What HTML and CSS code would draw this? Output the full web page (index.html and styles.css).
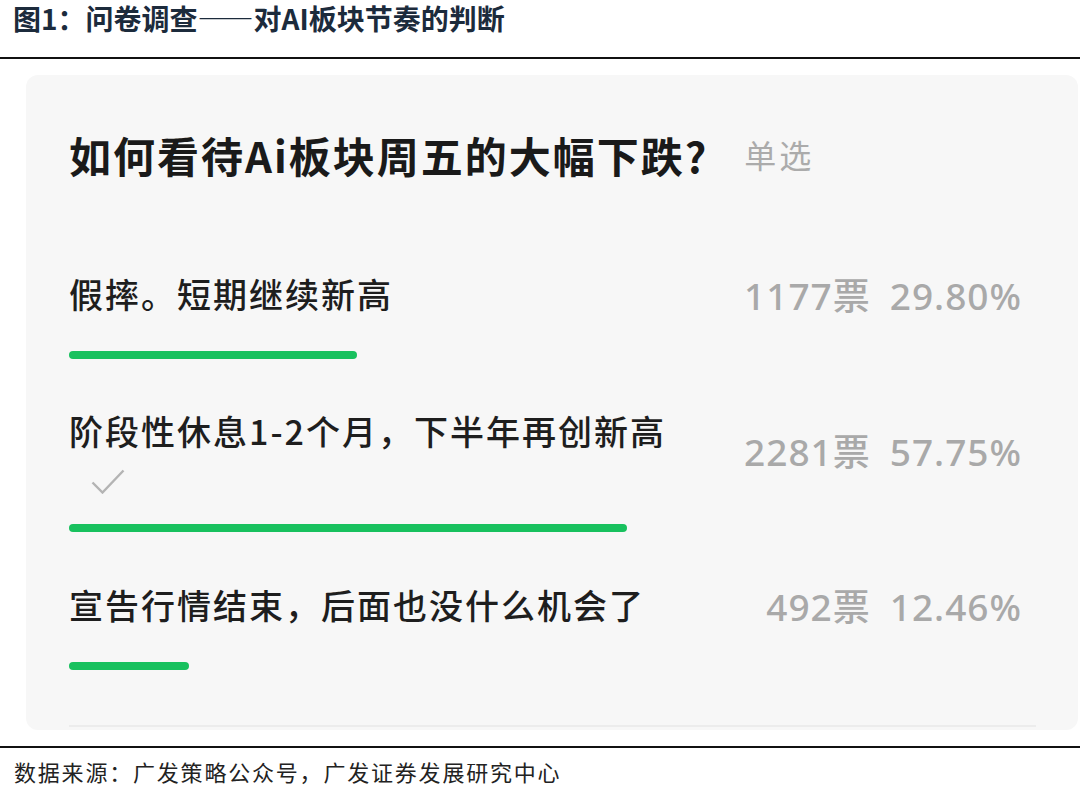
FILE: index.html
```html
<!DOCTYPE html>
<html lang="zh-CN">
<head>
  <meta charset="UTF-8">
  <meta name="viewport" content="width=device-width, initial-scale=1.0">
  <title>问卷调查</title>
  <link rel="stylesheet" href="styles.css">
</head>
<body>

<div class="fig-title">图1：问卷调查——对AI板块节奏的判断</div>

<div class="vote-card">
  <div class="question">
    <span class="q-text">如何看待Ai板块周五的大幅下跌?</span>
    <span class="q-type">单选</span>
  </div>

  <div class="option">
    <div class="opt-row">
      <div class="opt-text">假摔。短期继续新高</div>
      <div class="opt-count"><span>1177票</span><span class="pct">29.80%</span></div>
    </div>
    <div class="bar"><div class="fill" style="width:29.80%"></div></div>
  </div>

  <div class="option">
    <div class="opt-row">
      <div class="opt-text">
        阶段性休息1-2个月，下半年再创新高
        <svg class="check" width="34" height="25" viewBox="0 0 34 25">
          <path d="M1.5 13.5 L11.5 23.5 L32.5 1.5" fill="none" stroke="#b4b4b4" stroke-width="2.4"/>
        </svg>
      </div>
      <div class="opt-count"><span>2281票</span><span class="pct">57.75%</span></div>
    </div>
    <div class="bar"><div class="fill" style="width:57.75%"></div></div>
  </div>

  <div class="option">
    <div class="opt-row">
      <div class="opt-text">宣告行情结束，后面也没什么机会了</div>
      <div class="opt-count"><span>492票</span><span class="pct">12.46%</span></div>
    </div>
    <div class="bar"><div class="fill" style="width:12.46%"></div></div>
  </div>

  <div class="divider"></div>
</div>

<div class="source">数据来源：广发策略公众号，广发证券发展研究中心</div>

</body>
</html>
```

FILE: styles.css
```css
* { margin:0; padding:0; box-sizing:border-box; }

body { background:#fff; font-family:"Noto Sans CJK SC", "Noto Sans", sans-serif; width:1080px; }

.fig-title { padding:1px 0 22px 13px; font-size:28px; line-height:34px; font-weight:700; color:#1c2b3c; border-bottom:2px solid #111; }

.vote-card { margin:16px 2px 16px 26px; background:#f7f7f7; border-radius:12px; padding:51px 42px 3px 43px; }

.question { display:flex; align-items:center; height:56px; }
.q-text { font-size:42px; font-weight:700; letter-spacing:2px; color:#1a1a1a; }
.q-type { margin-left:36px; font-size:32px; letter-spacing:3px; color:#ababab; }

.option { margin-top:46px; }
.question + .option { margin-top:85px; }

.opt-row { display:flex; align-items:center; }
.opt-text { flex:1; font-size:34px; line-height:52px; letter-spacing:2px; font-weight:500; color:#1e1e1e; }
.check { display:block; margin:12px 0 0 22px; }

.opt-count { margin-right:14px; font-family:"Noto Sans", "Noto Sans CJK SC", sans-serif; font-size:37px; letter-spacing:1px; font-weight:500; color:#a9a9a9; white-space:nowrap; }
.opt-count .pct { margin-left:19px; }

.bar { margin-top:30px; height:8px; }
.fill { height:8px; border-radius:4px; background:#18c15e; }

.divider { margin-top:55px; height:2px; background:#ececec; }

.source { border-top:2px solid #111; padding:8px 0 0 14px; font-size:22px; line-height:30px; letter-spacing:1.8px; color:#222; }
```
